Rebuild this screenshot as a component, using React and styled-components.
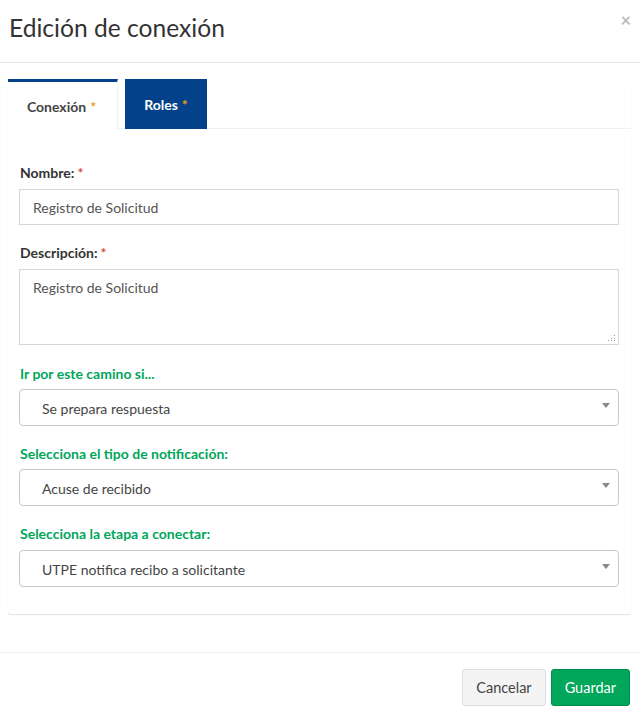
import React from "react";
import styled, { createGlobalStyle } from "styled-components";

const Global = createGlobalStyle`
  html, body { margin: 0; padding: 0; background: #fff; }
  body { font-family: "Source Sans Pro", Lato, "Open Sans", sans-serif; color: #333; font-size: 14px; }
  * { box-sizing: border-box; }
`;

const Modal = styled.div`
  width: 641px;
  height: 713px;
  display: flex;
  flex-direction: column;
  background: #fff;
`;

const Header = styled.div`
  height: 63px;
  border-bottom: 1px solid #e9e9e9;
  display: flex;
  align-items: flex-start;
  justify-content: space-between;
  padding: 11px 10px 0 9px;
`;

const Title = styled.h4`
  margin: 0;
  font-size: 24.6px;
  font-weight: 400;
  line-height: 34px;
  color: #333;
`;

const Close = styled.span`
  font-size: 18px;
  font-weight: 700;
  color: #bbb;
  line-height: 16px;
  margin-top: 1px;
`;

const Body = styled.div`
  padding: 16px 10px 0 8px;
  flex: 1;
`;

const Box = styled.div`
  background: #fff;
  border-radius: 3px;
  box-shadow: 0 1px 1px rgba(0, 0, 0, 0.12);
  padding-bottom: 27px;
`;

const TabNav = styled.div`
  display: flex;
  gap: 7px;
  height: 50px;
  border-bottom: 1px solid #f1f1f1;
`;

const Tab = styled.div`
  display: flex;
  align-items: center;
  justify-content: center;
  height: 50px;
  font-weight: 700;
  font-size: 14px;
  ${(p) =>
    p.$active
      ? `
    width: 110px;
    border-top: 3px solid #03428a;
    border-right: 1px solid #f1f1f1;
    background: #fff;
    color: #444;
    height: 51px;
    margin-bottom: -1px;
    padding-right: 2px;
  `
      : `
    width: 82px;
    background: #03428a;
    color: #fff;
  `}
`;

const Star = styled.span`
  color: ${(p) => p.$color};
  margin-left: ${(p) => p.$gap ?? 4}px;
  font-weight: 700;
`;

const TabContent = styled.div`
  padding: 34px 12px 0 11px;
  display: flex;
  flex-direction: column;
  gap: 18px;
`;

const Group = styled.div`
  display: flex;
  flex-direction: column;
  gap: ${(p) => p.$gap || 6}px;
  margin-top: ${(p) => p.$top || 0}px;
`;

const Label = styled.label`
  font-weight: 700;
  font-size: 14px;
  line-height: 20px;
  color: ${(p) => (p.$green ? "#00a65a" : "#333")};
  padding-left: 1px;
`;

const Input = styled.div`
  height: 36px;
  border: 1px solid #d2d6de;
  padding: 0 13px;
  display: flex;
  align-items: center;
  color: #555;
  font-size: 14px;
`;

const TextArea = styled.div`
  position: relative;
  height: 76px;
  border: 1px solid #d2d6de;
  padding: 8px 13px;
  color: #555;
  font-size: 14px;
  line-height: 20px;
`;

const Grip = styled.svg`
  position: absolute;
  right: 2px;
  bottom: 2px;
`;

const Select = styled.div`
  position: relative;
  height: 37px;
  border: 1px solid #c8c8c8;
  border-radius: 4px;
  padding: 1px 22px 0;
  display: flex;
  align-items: center;
  color: #444;
  font-size: 14px;
`;

const Arrow = styled.span`
  position: absolute;
  right: 8px;
  top: 13px;
  width: 0;
  height: 0;
  border-left: 4px solid transparent;
  border-right: 4px solid transparent;
  border-top: 5px solid #888;
`;

const Footer = styled.div`
  border-top: 1px solid #f0f0f0;
  height: 61px;
  display: flex;
  justify-content: flex-end;
  align-items: flex-start;
  gap: 5px;
  padding: 16px 11px 0 0;
`;

const Button = styled.button`
  height: 37px;
  padding: 0 13px;
  font-family: inherit;
  font-size: 14.5px;
  border-radius: 3px;
  border: 1px solid ${(p) => (p.$primary ? "#008d4c" : "#ddd")};
  background: ${(p) => (p.$primary ? "#00a65a" : "#f4f4f4")};
  color: ${(p) => (p.$primary ? "#fff" : "#444")};
`;

function Field({ label, green, children, gap, top }) {
  return (
    <Group $gap={gap} $top={top}>
      <Label $green={green}>{label}</Label>
      {children}
    </Group>
  );
}

export default function App() {
  return (
    <Modal>
      <Global />
      <Header>
        <Title>Edición de conexión</Title>
        <Close>×</Close>
      </Header>
      <Body>
        <Box>
          <TabNav>
            <Tab $active>
              Conexión<Star $color="#f39c12">*</Star>
            </Tab>
            <Tab>
              Roles<Star $color="#f39c12">*</Star>
            </Tab>
          </TabNav>
          <TabContent>
            <Field
              label={
                <>
                  Nombre:<Star $color="#dd4b39" $gap={3}>*</Star>
                </>
              }
            >
              <Input>Registro de Solicitud</Input>
            </Field>
            <Field
              label={
                <>
                  Descripción:<Star $color="#dd4b39" $gap={3}>*</Star>
                </>
              }
            >
              <TextArea>
                Registro de Solicitud
                <Grip width="8" height="8" viewBox="0 0 8 8">
                  <g fill="#999">
                    <rect x="6" y="1" width="1" height="1" />
                    <rect x="6" y="4" width="1" height="1" />
                    <rect x="3" y="4" width="1" height="1" />
                    <rect x="6" y="6" width="1" height="1" />
                    <rect x="3" y="6" width="1" height="1" />
                    <rect x="0" y="6" width="1" height="1" />
                  </g>
                </Grip>
              </TextArea>
            </Field>
            <Field label="Ir por este camino si..." green gap={5} top={1}>
              <Select>
                Se prepara respuesta
                <Arrow />
              </Select>
            </Field>
            <Field label="Selecciona el tipo de notificación:" green gap={5}>
              <Select>
                Acuse de recibido
                <Arrow />
              </Select>
            </Field>
            <Field label="Selecciona la etapa a conectar:" green gap={6}>
              <Select>
                UTPE notifica recibo a solicitante
                <Arrow />
              </Select>
            </Field>
          </TabContent>
        </Box>
      </Body>
      <Footer>
        <Button>Cancelar</Button>
        <Button $primary>Guardar</Button>
      </Footer>
    </Modal>
  );
}
